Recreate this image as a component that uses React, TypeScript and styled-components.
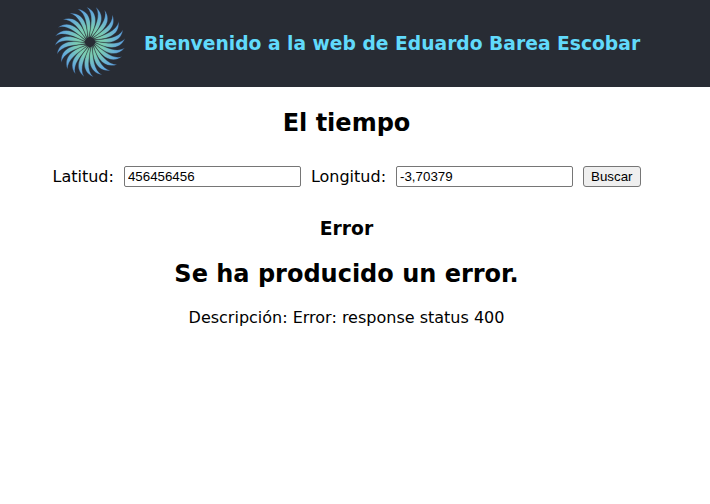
import React, { useState } from 'react';
import styled, { createGlobalStyle } from 'styled-components';

const GlobalStyle = createGlobalStyle`
  body {
    margin: 0;
    background: #fff;
    color: #000;
    font: 16px/20px "DejaVu Sans", sans-serif;
  }
`;

const Header = styled.header`
  display: flex;
  align-items: center;
  justify-content: center;
  gap: 18px;
  padding: 8px 16px 7px 0;
  background: #282c34;
  color: #61dafb;
`;

const Logo = styled.svg`
  flex: none;
  width: 72px;
  height: 72px;
  overflow: visible;
`;

const Content = styled.main`
  display: flex;
  flex-direction: column;
  align-items: center;
  gap: 20px;
  padding: 22px 17px 20px 0;
  text-align: center;
`;

const Title = styled.h2`
  margin: 0;
  font-size: 24px;
  line-height: 28px;
`;

const Subtitle = styled.h3`
  margin: 0;
  line-height: 22px;
`;

const Description = styled.p`
  margin: 0;
`;

const SearchForm = styled.form`
  display: flex;
  flex-wrap: wrap;
  align-items: center;
  justify-content: center;
  gap: 10px;
  margin: 9px 0 11px;
`;

const TextInput = styled.input`
  box-sizing: border-box;
  width: 177px;
  height: 21px;
  padding: 1px 3px;
  border: 1px solid #767676;
  border-radius: 2px;
  background: #fff;
  color: #000;
  font-family: "Liberation Sans", Arial, sans-serif;
`;

const Button = styled.button`
  box-sizing: border-box;
  height: 21px;
  padding: 1px 7px;
  border: 1px solid #767676;
  border-radius: 3px;
  background: #efefef;
  color: #000;
  font-family: "Liberation Sans", Arial, sans-serif;
`;

const BLADES = Array.from({ length: 24 }, (_, i) => i * 15);

function Pinwheel() {
  return (
    <Logo viewBox="-36 -34 72 72" aria-hidden="true">
      <defs>
        <radialGradient id="blade" gradientUnits="userSpaceOnUse" cx="0" cy="0" r="35">
          <stop offset="0" stopColor="#7ccba4" />
          <stop offset="0.4" stopColor="#7accb4" />
          <stop offset="0.75" stopColor="#68b0d6" />
          <stop offset="1" stopColor="#5a9de0" />
        </radialGradient>
      </defs>
      {BLADES.map((angle) => (
        <path
          key={angle}
          transform={`rotate(${angle + 1})`}
          d="M5 0C14 5 29 10 35 -4C28 3.5 17 0.5 5 -0.6Z"
          fill="url(#blade)"
          stroke="#282c34"
          strokeWidth="0.3"
        />
      ))}
    </Logo>
  );
}

export default function App() {
  const [latitude, setLatitude] = useState('456456456');
  const [longitude, setLongitude] = useState('-3,70379');

  return (
    <>
      <GlobalStyle />
      <Header>
        <Pinwheel />
        <Subtitle>Bienvenido a la web de Eduardo Barea Escobar</Subtitle>
      </Header>
      <Content>
        <Title>El tiempo</Title>
        <SearchForm onSubmit={(event) => event.preventDefault()}>
          <label htmlFor="latitude">Latitud:</label>
          <TextInput id="latitude" value={latitude} onChange={(event) => setLatitude(event.target.value)} />
          <label htmlFor="longitude">Longitud:</label>
          <TextInput id="longitude" value={longitude} onChange={(event) => setLongitude(event.target.value)} />
          <Button type="submit">Buscar</Button>
        </SearchForm>
        <Subtitle>Error</Subtitle>
        <Title>Se ha producido un error.</Title>
        <Description>Descripción: Error: response status 400</Description>
      </Content>
    </>
  );
}
